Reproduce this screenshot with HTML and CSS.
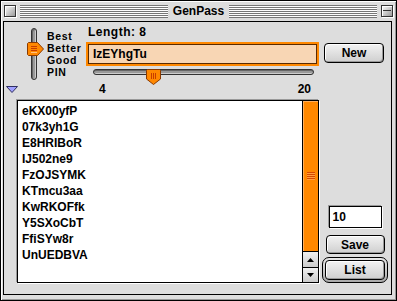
FILE: index.html
```html
<!DOCTYPE html>
<html lang="en">

<head>
    <meta charset="UTF-8">
    <title>GenPass</title>
    <link rel="stylesheet" href="styles.css">
</head>

<body>
    <div class="window">
        <div class="titlebar">
            <span class="closebox"></span>
            <span class="stripes"></span>
            <span class="title">GenPass</span>
            <span class="stripes"></span>
            <span class="zoombox"></span>
        </div>
        <div class="content">
            <div class="top">
                <div class="vslider">
                    <div class="vtrack"></div>
                    <svg class="vthumb" width="17" height="14" viewBox="0 0 17 14">
                        <polygon points="0.5,1.5 1.5,0.5 10.5,0.5 16.5,7 10.5,13.5 1.5,13.5 0.5,12.5" fill="#ff8800" stroke="#8a3a00" />
                        <line x1="4" y1="4.5" x2="10" y2="4.5" stroke="#c83c00" />
                        <line x1="4" y1="6.5" x2="10" y2="6.5" stroke="#c83c00" />
                        <line x1="4" y1="8.5" x2="10" y2="8.5" stroke="#c83c00" />
                        <line x1="4" y1="10.5" x2="10" y2="10.5" stroke="#ffc080" />
                    </svg>
                </div>
                <div class="levels">
                    <div>Best</div>
                    <div>Better</div>
                    <div>Good</div>
                    <div>PIN</div>
                </div>
                <div class="middle">
                    <div class="len-label">Length: 8</div>
                    <div class="pass-field">IzEYhgTu</div>
                    <div class="hslider">
                        <div class="htrack"></div>
                        <svg class="hthumb" width="15" height="16" viewBox="0 0 15 16">
                            <polygon points="0.5,1.5 1.5,0.5 13.5,0.5 14.5,1.5 14.5,10 7.5,15.5 0.5,10" fill="#ff8800" stroke="#8a3a00" />
                            <line x1="5.5" y1="4" x2="5.5" y2="10" stroke="#c83c00" />
                            <line x1="7.5" y1="4" x2="7.5" y2="10" stroke="#c83c00" />
                            <line x1="9.5" y1="4" x2="9.5" y2="10" stroke="#c83c00" />
                        </svg>
                    </div>
                    <div class="range"><span>4</span><span>20</span></div>
                </div>
                <button class="btn new-btn">New</button>
            </div>

            <svg class="disclosure" width="12" height="7" viewBox="0 0 12 7">
                <polygon points="0.5,0.5 11.5,0.5 6,6.5" fill="#a0a0ff" stroke="#303060" />
            </svg>

            <div class="bottom">
                <div class="listbox">
                    <ul class="items">
                        <li>eKX00yfP</li>
                        <li>07k3yh1G</li>
                        <li>E8HRIBoR</li>
                        <li>IJ502ne9</li>
                        <li>FzOJSYMK</li>
                        <li>KTmcu3aa</li>
                        <li>KwRKOFfk</li>
                        <li>Y5SXoCbT</li>
                        <li>FfiSYw8r</li>
                        <li>UnUEDBVA</li>
                    </ul>
                    <div class="scrollbar">
                        <div class="sthumb"><span class="grip"></span></div>
                        <div class="arrow">
                            <svg width="7" height="4" viewBox="0 0 7 4"><polygon points="3.5,0 7,4 0,4" fill="#000" /></svg>
                        </div>
                        <div class="arrow arrow-down">
                            <svg width="7" height="4" viewBox="0 0 7 4"><polygon points="0,0 7,0 3.5,4" fill="#000" /></svg>
                        </div>
                    </div>
                </div>
                <div class="side">
                    <div class="count-field">10</div>
                    <button class="btn save-btn">Save</button>
                    <div class="default-ring">
                        <button class="btn list-btn">List</button>
                    </div>
                </div>
            </div>
        </div>
    </div>
</body>

</html>
```

FILE: styles.css
```css
body {
    margin: 0;
    font: bold 12px "Liberation Sans", Arial, sans-serif;
    color: #000;
}

.window {
    width: 397px;
    height: 301px;
    box-sizing: border-box;
    border: 1px solid #000;
    background: #dddddd;
    box-shadow: inset 1px 1px #fff, inset -1px -1px #999;
}

/* title bar */

.titlebar {
    height: 20px;
    display: flex;
    align-items: center;
    padding: 0 3px;
}

.closebox,
.zoombox {
    width: 12px;
    height: 12px;
    box-sizing: border-box;
    border: 1px solid #333;
    background: linear-gradient(135deg, #fff, #999);
    box-shadow: inset 1px 1px #fff, 1px 1px #fff;
}

.zoombox {
    margin-left: 3px;
    background: linear-gradient(#333, #333) 1px 4px / 8px 1px no-repeat,
        linear-gradient(135deg, #fff, #999);
}

.stripes {
    flex: 1;
    height: 13px;
    margin-left: 4px;
    background: repeating-linear-gradient(#777 0 1px, #fff 1px 2px);
}

.stripes + .zoombox {
    margin-left: 4px;
}

.title {
    padding: 0 5px;
    font-size: 12px;
    line-height: 20px;
}

.title + .stripes {
    margin-left: 0;
}

/* content */

.content {
    margin: 0 4px 5px 2px;
    height: 274px;
    box-sizing: border-box;
    border: 1px solid #000;
    background: #dddddd;
}

.top {
    display: flex;
    align-items: flex-start;
    height: 63px;
    padding-left: 23px;
}

.vslider {
    position: relative;
    width: 17px;
    height: 52px;
    margin-top: 6px;
}

.vtrack {
    width: 6px;
    height: 52px;
    margin-left: 4px;
    box-sizing: border-box;
    border: 1px solid #333;
    border-radius: 3px;
    background: #999;
    box-shadow: inset 1px 1px #666, inset -1px 0 #ccc;
}

.vthumb {
    position: absolute;
    top: 14px;
    left: 0;
}

.levels {
    width: 39px;
    margin: 8px 0 0 3px;
    font-size: 10.5px;
    letter-spacing: 0.7px;
    line-height: 12px;
}

.middle {
    width: 233px;
    margin-top: 3px;
}

.len-label {
    line-height: 14px;
    padding-left: 2px;
    letter-spacing: 0.5px;
}

.pass-field {
    margin-top: 3px;
    height: 24px;
    box-sizing: border-box;
    border: 2px solid #ff8800;
    box-shadow: inset 0 0 0 1px #5a2a00;
    background: #f8d6b4;
    padding: 0 5px;
    line-height: 18px;
    padding-top: 1px;
}

.hslider {
    position: relative;
    width: 221px;
    height: 16px;
    margin: 2px 0 0 7px;
}

.htrack {
    height: 6px;
    margin-top: 3px;
    box-sizing: border-box;
    border: 1px solid #333;
    border-radius: 3px;
    background: #999;
    box-shadow: inset 0 1px #666, inset 0 -1px #ccc;
}

.hthumb {
    position: absolute;
    top: 0;
    left: 53px;
}

.range {
    display: flex;
    justify-content: space-between;
    margin-top: -2px;
    padding: 0 8px 0 13px;
    line-height: 12px;
}

.btn {
    font: bold 12px "Liberation Sans", Arial, sans-serif;
    color: #000;
    padding: 0;
    border: 1px solid #000;
    border-radius: 4px;
    background: linear-gradient(#f2f2f2, #cfcfcf);
    box-shadow: inset 1px 1px #fff, inset -1px -1px #999;
}

.new-btn {
    width: 60px;
    height: 20px;
    margin: 21px 0 0 5px;
}

.disclosure {
    display: block;
    margin: 1px 0 0 2px;
}

.bottom {
    display: flex;
    margin-top: 7px;
    padding-left: 13px;
}

.listbox {
    display: flex;
    width: 302px;
    height: 183px;
    box-sizing: border-box;
    border: 1px solid #000;
    background: #fff;
    box-shadow: 1px 1px #fff, -1px -1px #999;
}

.items {
    flex: 1;
    margin: 0;
    padding: 2px 0 0 4px;
    list-style: none;
    line-height: 16px;
}

.scrollbar {
    width: 16px;
    box-sizing: border-box;
    border-left: 1px solid #000;
    display: flex;
    flex-direction: column;
}

.sthumb {
    flex: 1;
    background: #ff8800;
    border-bottom: 1px solid #000;
    box-shadow: inset 1px 1px #ffb060;
    display: flex;
    align-items: center;
    justify-content: center;
}

.grip {
    width: 8px;
    height: 8px;
    background: repeating-linear-gradient(#d84800 0 1px, #ffa040 1px 2px);
}

.arrow {
    height: 15px;
    background: linear-gradient(#f0f0f0, #cccccc);
    display: flex;
    align-items: center;
    justify-content: center;
}

.arrow-down {
    border-top: 1px solid #000;
    height: 14px;
}

.side {
    width: 66px;
    height: 183px;
    margin-left: 3px;
    display: flex;
    flex-direction: column;
    align-items: center;
    justify-content: flex-end;
}

.count-field {
    width: 53px;
    height: 22px;
    box-sizing: border-box;
    border: 1px solid #000;
    background: #fff;
    box-shadow: -1px -1px #999, 1px 1px #fff;
    padding-left: 3px;
    line-height: 20px;
    margin-bottom: 7px;
}

.save-btn {
    width: 59px;
    height: 19px;
    margin-bottom: 3px;
}

.default-ring {
    width: 66px;
    height: 26px;
    box-sizing: border-box;
    border: 1px solid #000;
    border-radius: 7px;
    padding: 2px;
    background: linear-gradient(#e8e8e8, #aaa);
    display: flex;
}

.list-btn {
    flex: 1;
}
```
